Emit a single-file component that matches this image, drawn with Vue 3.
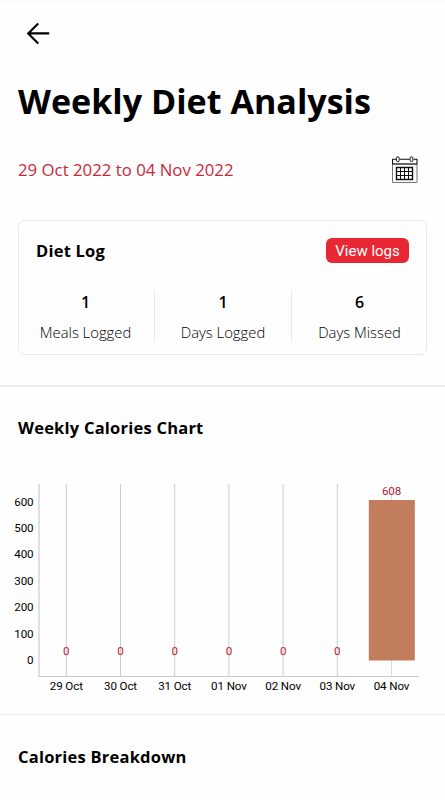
<script setup>
const stats = [
  { value: 1, label: 'Meals Logged' },
  { value: 1, label: 'Days Logged' },
  { value: 6, label: 'Days Missed' },
]
const days = [
  { label: '29 Oct', value: 0 },
  { label: '30 Oct', value: 0 },
  { label: '31 Oct', value: 0 },
  { label: '01 Nov', value: 0 },
  { label: '02 Nov', value: 0 },
  { label: '03 Nov', value: 0 },
  { label: '04 Nov', value: 608 },
]
const ticks = [600, 500, 400, 300, 200, 100, 0]
const baseline = 190.5
const perCalorie = 0.264
const xAt = (i) => 66.3 + i * 54.2
const yAt = (v) => baseline - v * perCalorie
</script>

<template>
  <main class="page">
    <header class="top">
      <button class="back" aria-label="Back">
        <svg width="26" height="26" viewBox="0 0 26 26">
          <path d="M24.2 13.4H3M13.2 3.4L3.2 13.4L13.2 23.4" fill="none" stroke="#000" stroke-width="2.1" />
        </svg>
      </button>
      <h1>Weekly Diet Analysis</h1>
      <div class="range">
        <span class="dates">29 Oct 2022 to 04 Nov 2022</span>
        <svg class="calendar" width="26" height="28" viewBox="0 0 26 28" fill="none" stroke="#111">
          <path d="M.5 7.5V26.5H25V7.5" stroke="#777" />
          <path d="M.5 8V3.2H4M8 3.2H17.5M21.5 3.2H25V8" stroke-width="1.1" />
          <path d="M.5 8H25" stroke-width="1.3" />
          <rect x="4.4" y=".8" width="2.8" height="4.8" rx="1.4" />
          <rect x="18.1" y=".8" width="2.8" height="4.8" rx="1.4" />
          <path d="M4.5 11.5H20.5V23.5H4.5Z" stroke-width="1.4" />
          <path d="M4.5 15.5H20.5M4.5 19.5H20.5M8.5 11.5V23.5M12.5 11.5V23.5M16.5 11.5V23.5" stroke-width="1" />
        </svg>
      </div>
    </header>

    <section class="card">
      <div class="card-head">
        <h2>Diet Log</h2>
        <button class="logs">View logs</button>
      </div>
      <div class="stats">
        <div v-for="stat in stats" :key="stat.label" class="stat">
          <strong>{{ stat.value }}</strong>
          <span>{{ stat.label }}</span>
        </div>
      </div>
    </section>

    <section class="chart-section">
      <h2>Weekly Calories Chart</h2>
      <svg class="chart" width="445" height="232" viewBox="0 0 445 232">
        <line
          v-for="(day, i) in days"
          :key="'grid' + i"
          :x1="xAt(i)"
          :x2="xAt(i)"
          y1="14"
          y2="206"
          class="grid"
          :class="{ faint: day.value }"
        />
        <path d="M39 14V206.5H419" class="axis" />
        <text v-for="tick in ticks" :key="tick" x="33.5" :y="yAt(tick) + 3.4" class="tick">{{ tick }}</text>
        <g v-for="(day, i) in days" :key="day.label">
          <rect
            v-if="day.value"
            :x="xAt(i) - 22.7"
            :y="yAt(day.value)"
            width="46"
            :height="day.value * perCalorie"
            class="bar"
          />
          <text :x="xAt(i)" :y="day.value ? yAt(day.value) - 4.8 : baseline - 5.2" class="value">{{ day.value }}</text>
          <text :x="xAt(i)" y="220" class="day">{{ day.label }}</text>
        </g>
      </svg>
    </section>

    <section class="breakdown">
      <h2>Calories Breakdown</h2>
    </section>
  </main>
</template>

<style>
body {
  background: #fefefe;
}
</style>

<style scoped>
.page {
  width: 445px;
  height: 800px;
  overflow: hidden;
  box-sizing: border-box;
  color: #000;
  background: #fefefe;
  border-top: 2px solid #fafafa;
  font-family: "Open Sans", "Noto Sans", sans-serif;
}
h1,
h2 {
  margin: 0;
  font-weight: 700;
}
button {
  padding: 0;
  border: 0;
  background: none;
}
.top {
  padding: 18px 28px 0 18px;
}
.back {
  display: block;
  width: 26px;
  height: 26px;
  margin-left: 7px;
}
.back svg {
  display: block;
}
h1 {
  margin-top: 31px;
  height: 48px;
  font-size: 34.1px;
  line-height: 48px;
  white-space: nowrap;
}
.range {
  display: flex;
  justify-content: space-between;
  align-items: center;
  height: 28px;
  margin-top: 31px;
}
.dates {
  color: #c9283b;
  font-size: 16.8px;
  line-height: 28px;
}
.calendar {
  margin-right: -0.5px;
}
.card {
  box-sizing: border-box;
  height: 135px;
  margin: 36px 18px 0;
  padding-top: 17px;
  border: 1.5px solid #e9e9e9;
  border-radius: 7px;
}
.card-head {
  display: flex;
  justify-content: space-between;
  align-items: center;
  height: 25px;
  padding: 0 17px;
}
h2 {
  font-size: 16.5px;
  letter-spacing: 0.22px;
  line-height: 24px;
}
.card-head h2 {
  line-height: 25px;
}
.logs {
  width: 83px;
  height: 25px;
  color: #fff;
  background: #e92734;
  border-radius: 6px;
  font-family: Roboto, sans-serif;
  font-size: 15px;
  line-height: 26px;
}
.stats {
  display: grid;
  grid-template-columns: 135px 137px 135px;
  margin-top: 27px;
}
.stat {
  display: flex;
  flex-direction: column;
  align-items: center;
  height: 52px;
}
.stat:first-child {
  padding-right: 2px;
}
.stat:last-child {
  padding-left: 1px;
}
.stat + .stat {
  border-left: 1px solid #e8e8e8;
}
.stat strong {
  font-size: 16px;
  font-weight: 600;
  line-height: 24px;
}
.stat span {
  margin-top: 7px;
  font-size: 14.8px;
  font-weight: 300;
  line-height: 22px;
  white-space: nowrap;
}
.chart-section {
  box-sizing: border-box;
  height: 330px;
  margin-top: 30px;
  padding-top: 29px;
  border-top: 2px solid #eee;
  border-bottom: 1px solid #eaeaea;
}
.chart-section h2,
.breakdown h2 {
  padding-left: 18px;
}
.chart {
  display: block;
  margin-top: 30px;
  font-family: Roboto, sans-serif;
  font-size: 11.6px;
  letter-spacing: -0.12px;
}
.grid {
  stroke: #ccc;
  stroke-width: 1;
}
.grid.faint {
  stroke: #e2dada;
}
.axis {
  fill: none;
  stroke: #ccc;
  stroke-width: 1.2;
}
.tick {
  text-anchor: end;
}
.value {
  fill: #b52232;
  text-anchor: middle;
}
.day {
  text-anchor: middle;
}
.bar {
  fill: #c17d5c;
}
.breakdown {
  padding-top: 30px;
}
</style>
